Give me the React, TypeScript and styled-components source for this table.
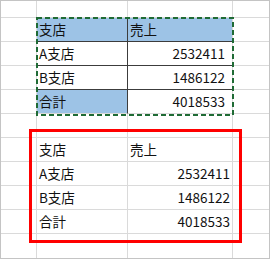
import React from 'react';
import styled, { createGlobalStyle } from 'styled-components';

const GlobalStyle = createGlobalStyle`
  html, body {
    margin: 0;
    padding: 0;
    background: #fff;
  }
`;

type Row = { cells: string[]; fills?: boolean[]; last?: boolean; inset?: number };

const table1: Row[] = [
  { cells: ['支店', '売上'], fills: [true, true] },
  { cells: ['A支店', '2532411'], inset: 7 },
  { cells: ['B支店', '1486122'], inset: 7 },
  { cells: ['合計', '4018533'], fills: [true, false], last: true, inset: 7 },
];

const table2: Row[] = [
  { cells: ['支店', '売上'] },
  { cells: ['A支店', '2532411'] },
  { cells: ['B支店', '1486122'] },
  { cells: ['合計', '4018533'] },
];

const Sheet = styled.div`
  position: relative;
  width: 270px;
  height: 259px;
  box-sizing: border-box;
  border: 1px solid #c4c4c4;
  display: grid;
  grid-template-columns: 36px 91px 105px 1fr;
  grid-template-rows: 17px repeat(9, 24px) 1fr;
  background: #fff;
  font-family: 'Noto Sans CJK JP', 'Noto Sans', sans-serif;
  font-size: 13.5px;
  color: #111;
  overflow: hidden;
`;

const Cell = styled.div<{
  $fill?: boolean;
  $darkRight?: boolean;
  $darkBottom?: boolean;
  $align?: 'left' | 'right';
  $inset?: number;
  $noRight?: boolean;
  $noBottom?: boolean;
}>`
  box-sizing: border-box;
  display: flex;
  align-items: center;
  justify-content: ${(p) => (p.$align === 'right' ? 'flex-end' : 'flex-start')};
  padding: 1px ${(p) => p.$inset ?? 2}px 0 2px;
  background: ${(p) => (p.$fill ? '#9dc3e6' : '#fff')};
  border-right: ${(p) => (p.$noRight ? 'none' : `1px solid ${p.$darkRight ? '#3c3c3c' : '#dadada'}`)};
  border-bottom: ${(p) => (p.$noBottom ? 'none' : `1px solid ${p.$darkBottom ? '#3c3c3c' : '#dadada'}`)};
  white-space: nowrap;
  line-height: 1;
`;

const Marquee = styled.svg`
  position: absolute;
  left: 35px;
  top: 16px;
  pointer-events: none;
`;

const Highlight = styled.div`
  position: absolute;
  left: 28px;
  top: 128px;
  width: 213px;
  height: 114px;
  box-sizing: border-box;
  border: 3px solid #ff0000;
  pointer-events: none;
`;

const ROWS = 11;

function rowFor(r: number): Row | null {
  if (r >= 1 && r <= 4) return table1[r - 1];
  if (r >= 6 && r <= 9) return table2[r - 6];
  return null;
}

const App: React.FC = () => {
  const cells: React.ReactNode[] = [];
  for (let r = 0; r < ROWS; r++) {
    const row = rowFor(r);
    const first = r >= 1 && r <= 4;
    for (let c = 0; c < 4; c++) {
      const inTable = row && (c === 1 || c === 2);
      const idx = c - 1;
      cells.push(
        <Cell
          key={`${r}-${c}`}
          $fill={inTable ? row!.fills?.[idx] : false}
          $darkRight={!!(inTable && first && c === 1)}
          $darkBottom={!!(inTable && first && !row!.last)}
          $align={inTable && idx === 1 && r !== 1 && r !== 6 ? 'right' : 'left'}
          $inset={inTable && idx === 1 ? row!.inset : undefined}
          $noRight={c === 3}
          $noBottom={r === ROWS - 1}
        >
          {inTable ? row!.cells[idx] : null}
        </Cell>
      );
    }
  }

  return (
    <>
      <GlobalStyle />
      <Sheet>
        {cells}
        <Marquee width={198} height={100}>
          <rect
            x={1}
            y={1}
            width={196}
            height={97}
            fill="none"
            stroke="#1f6b35"
            strokeWidth={2}
            strokeDasharray="5 3"
          />
        </Marquee>
        <Highlight />
      </Sheet>
    </>
  );
};

export default App;
